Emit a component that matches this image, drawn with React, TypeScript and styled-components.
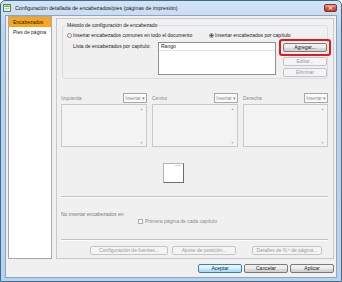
import styled, { createGlobalStyle } from 'styled-components';

const GlobalStyle = createGlobalStyle`
  html, body { margin: 0; padding: 0; background: #fff; }
  body { font-family: "Liberation Sans", Arial, sans-serif; font-size: 5px; color: #1b1b1b; }
  * { box-sizing: border-box; }
`;

const Window = styled.div`
  width: 342px;
  height: 282px;
  display: flex;
  flex-direction: column;
  padding: 0 4px 3px;
  border: 1px solid #3d6c8e;
  border-radius: 5px 5px 0 0;
  background: linear-gradient(180deg, #d3e3f4 0%, #bcd3ec 12%, #b9d1ea 100%);
`;

const TitleBar = styled.div`
  height: 15px;
  display: flex;
  align-items: center;
  gap: 4px;
  margin-left: -2px;
`;

const TitleText = styled.span`
  flex: 1;
  font-size: 5.3px;
  color: #1a1a1a;
  white-space: nowrap;
`;

const CloseButton = styled.div`
  align-self: flex-start;
  margin-top: 3px;
  width: 13px;
  height: 8px;
  border: 1px solid #8a2f25;
  border-radius: 2px;
  background: linear-gradient(180deg, #e8a594 0%, #d4533c 55%, #c43a22 100%);
  display: flex;
  align-items: center;
  justify-content: center;
`;

const Client = styled.div`
  flex: 1;
  display: flex;
  flex-direction: column;
  background: #f0f0f0;
  border: 1px solid #8aa6c1;
  padding: 0 2px 4px;
`;

const Body = styled.div`
  height: 243px;
  display: flex;
  gap: 4px;
`;

const Sidebar = styled.div`
  width: 44px;
  background: #fff;
  border: 1px solid #a8a8a8;
`;

const NavItem = styled.div<{ $active?: boolean }>`
  height: 10px;
  line-height: 10px;
  padding-left: 4px;
  white-space: nowrap;
  background: ${p => (p.$active ? '#f8a61c' : 'transparent')};
  color: #1b1b1b;
`;

const Panel = styled.div`
  flex: 1;
  margin-top: 2px;
  border: 1px solid #c9c9c9;
  padding: 0 5px 0 4px;
  display: flex;
  flex-direction: column;
`;

const Group = styled.fieldset`
  margin: 3px 0 0 1px;
  padding: 0 0 1px 4px;
  border: 1px solid #d5dfe5;
  border-radius: 3px;
  min-width: 0;
`;

const Legend = styled.legend`
  padding: 0 1px;
  margin-left: -1px;
  line-height: 7px;
  font-size: 5px;
  color: #1b1b1b;
`;

const RadioRow = styled.div`
  margin-top: 3px;
  height: 6px;
  display: flex;
  align-items: center;
`;

const RadioItem = styled.label<{ $w?: number }>`
  display: flex;
  align-items: center;
  gap: 1px;
  width: ${p => (p.$w ? `${p.$w}px` : 'auto')};
  white-space: nowrap;
`;

const Radio = styled.span<{ $checked?: boolean }>`
  width: 5px;
  height: 5px;
  border-radius: 50%;
  border: 1px solid #8c8c8c;
  background: ${p => (p.$checked ? 'radial-gradient(circle, #2a5d8a 0 1.2px, #f4f4f4 1.3px)' : '#f4f4f4')};
`;

const ListRow = styled.div`
  margin-top: 4px;
  display: flex;
  align-items: flex-start;
`;

const ListLabel = styled.div`
  width: 85px;
  margin-left: 6px;
  margin-top: 1px;
  line-height: 6px;
  white-space: nowrap;
`;

const ListBox = styled.div`
  width: 118px;
  height: 33px;
  background: #fff;
  border: 1px solid #8e8f8f;
`;

const ListHeader = styled.div`
  height: 8px;
  line-height: 7px;
  padding-left: 2px;
  border-bottom: 1px solid #e3e3e3;
`;

const ButtonColumn = styled.div`
  width: 44px;
  margin: 1px 0 0 7px;
  display: flex;
  flex-direction: column;
  gap: 2px;
`;

const Highlight = styled.div`
  margin: -4px -4px -1px;
  padding: 2px;
  border: 2px solid #e8141e;
  border-radius: 3px;
`;

const Button = styled.div<{ $w?: number; $ml?: number; $disabled?: boolean; $default?: boolean }>`
  width: ${p => (p.$w ? `${p.$w}px` : '100%')};
  margin-left: ${p => p.$ml ?? 0}px;
  height: 9px;
  line-height: 7px;
  text-align: center;
  white-space: nowrap;
  border-radius: 2px;
  border: 1px solid ${p => (p.$disabled ? '#c3c6c8' : p.$default ? '#3c7fb1' : '#7a7a7a')};
  background: ${p =>
    p.$disabled
      ? '#f4f4f4'
      : p.$default
      ? 'linear-gradient(180deg, #eaf6fd 0%, #d9f0fc 50%, #bee6fd 51%, #a7d9f5 100%)'
      : 'linear-gradient(180deg, #f2f2f2 0%, #ebebeb 50%, #dddddd 51%, #cfcfcf 100%)'};
  color: ${p => (p.$disabled ? '#9a9a9a' : '#1b1b1b')};
`;

const Columns = styled.div`
  margin-top: 14px;
  display: grid;
  grid-template-columns: 86px 86px 85px;
  column-gap: 5px;
`;

const Column = styled.div`
  display: flex;
  flex-direction: column;
`;

const ColumnHeader = styled.div`
  height: 10px;
  display: flex;
  align-items: center;
  justify-content: space-between;
  color: #8a8a8a;
`;

const InsertButton = styled.div`
  height: 10px;
  width: 24px;
  border: 1px solid #a8a8a8;
  background: #fbfbfb;
  color: #8a8a8a;
  display: flex;
  align-items: center;
  justify-content: center;
  gap: 1px;
  font-size: 4.6px;
`;

const TextArea = styled.div`
  margin-top: 1px;
  height: 43px;
  border: 1px solid #c9c9c9;
  background: #f3f3f3;
  display: flex;
  flex-direction: column;
  justify-content: space-between;
  align-items: flex-end;
  padding: 2px 3px 1px;
  color: #9a9a9a;
  font-size: 3px;
`;

const PagePreview = styled.div`
  margin: 16px 0 0 102px;
  width: 21px;
  height: 20px;
  background: #fff;
  border: 1px solid #b4b4b4;
  border-right-color: #6e6e6e;
  border-bottom-color: #6e6e6e;
  padding: 1px 2px;
`;

const PreviewLine = styled.div`
  height: 1px;
  width: 6px;
  margin-left: auto;
  background: #d8d8d8;
`;

const Separator = styled.div<{ $mt: number }>`
  margin-top: ${p => p.$mt}px;
  height: 2px;
  border-top: 1px solid #c4c4c4;
  border-bottom: 1px solid #fdfdfd;
`;

const MutedText = styled.div`
  margin-top: 13px;
  line-height: 6px;
  color: #7a7a7a;
  white-space: nowrap;
`;

const CheckRow = styled.label`
  margin: 1px 0 0 77px;
  display: flex;
  align-items: center;
  gap: 2px;
  height: 6px;
  color: #8a8a8a;
  white-space: nowrap;
`;

const CheckBox = styled.span`
  width: 5px;
  height: 5px;
  border: 1px solid #b0b0b0;
  background: #f6f6f6;
`;

const BottomButtons = styled.div`
  margin: 5px 0 0 29px;
  display: flex;
`;

const Footer = styled.div`
  margin-top: 5px;
  display: flex;
  justify-content: flex-end;
  gap: 2px;
`;

const AppIcon = () => (
  <svg width="8" height="8" viewBox="0 0 8 8">
    <rect x="0.5" y="0.5" width="7" height="7" fill="#f7fbf4" stroke="#4f8f3a" />
    <rect x="1.5" y="1.5" width="5" height="1.5" fill="#6cae4a" />
    <rect x="1.5" y="4" width="5" height="0.8" fill="#9cc9e8" />
    <rect x="1.5" y="5.6" width="3" height="0.8" fill="#9cc9e8" />
  </svg>
);

const CloseGlyph = () => (
  <svg width="5" height="4" viewBox="0 0 5 4">
    <path d="M0.6 0.4 L4.4 3.6 M4.4 0.4 L0.6 3.6" stroke="#fff" strokeWidth="1" />
  </svg>
);

const columns = ['Izquierda', 'Centro', 'Derecha'];

export default function App() {
  return (
    <>
      <GlobalStyle />
      <Window>
        <TitleBar>
          <AppIcon />
          <TitleText>Configuración detallada de encabezados/pies (páginas de impresión)</TitleText>
          <CloseButton>
            <CloseGlyph />
          </CloseButton>
        </TitleBar>
        <Client>
          <Body>
            <Sidebar>
              <NavItem $active>Encabezados</NavItem>
              <NavItem>Pies de página</NavItem>
            </Sidebar>
            <Panel>
              <Group>
                <Legend>Método de configuración de encabezado</Legend>
                <RadioRow>
                  <RadioItem $w={142}>
                    <Radio />
                    Insertar encabezados comunes en todo el documento
                  </RadioItem>
                  <RadioItem>
                    <Radio $checked />
                    Insertar encabezados por capítulo
                  </RadioItem>
                </RadioRow>
                <ListRow>
                  <ListLabel>Lista de encabezados por capítulo:</ListLabel>
                  <ListBox>
                    <ListHeader>Rango</ListHeader>
                  </ListBox>
                  <ButtonColumn>
                    <Highlight>
                      <Button>Agregar...</Button>
                    </Highlight>
                    <Button $disabled>Editar...</Button>
                    <Button $disabled>Eliminar</Button>
                  </ButtonColumn>
                </ListRow>
              </Group>

              <Columns>
                {columns.map(name => (
                  <Column key={name}>
                    <ColumnHeader>
                      <span>{name}</span>
                      <InsertButton>
                        Insertar<span>▾</span>
                      </InsertButton>
                    </ColumnHeader>
                    <TextArea>
                      <span>▲</span>
                      <span>▼</span>
                    </TextArea>
                  </Column>
                ))}
              </Columns>

              <PagePreview>
                <PreviewLine />
              </PagePreview>

              <Separator $mt={13} />
              <MutedText>No insertar encabezados en</MutedText>
              <CheckRow>
                <CheckBox />
                Primera página de cada capítulo
              </CheckRow>
              <Separator $mt={15} />
              <BottomButtons>
                <Button $disabled $w={78}>Configuración de fuentes...</Button>
                <Button $disabled $w={64} $ml={4}>Ajuste de posición...</Button>
                <Button $disabled $w={70} $ml={16}>Detalles de N.º de página...</Button>
              </BottomButtons>
            </Panel>
          </Body>
          <Footer>
            <Button $default $w={44}>Aceptar</Button>
            <Button $w={44}>Cancelar</Button>
            <Button $w={44}>Aplicar</Button>
          </Footer>
        </Client>
      </Window>
    </>
  );
}
